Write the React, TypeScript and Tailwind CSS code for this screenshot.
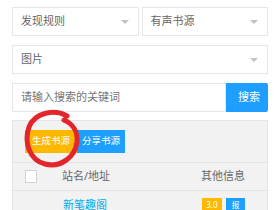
import React from "react";

const FONT = { fontFamily: '"Noto Sans", "Noto Sans CJK SC", sans-serif' };

function Select({ label, className = "" }: { label: string; className?: string }) {
  return (
    <div className={`flex h-[29px] items-center justify-between border border-[#e6e6e6] bg-white pl-[8px] pr-[9px] ${className}`}>
      <span className="text-[11px] text-[#666]">{label}</span>
      <span className="h-0 w-0 border-x-[4px] border-t-[4px] border-x-transparent border-t-[#c2c2c2]" />
    </div>
  );
}

export default function App() {
  return (
    <div className="relative h-[210px] w-[280px] overflow-hidden bg-white px-[12px] pt-[7px]" style={FONT}>
      {/* ── filters ── */}
      <div className="flex gap-[3px]">
        <Select label="发现规则" className="flex-1" />
        <Select label="有声书源" className="flex-1" />
      </div>
      <Select label="图片" className="mt-[9px]" />

      {/* ── search ── */}
      <div className="mt-[9px] flex h-[29px]">
        <div className="flex flex-1 items-center border border-[#e6e6e6] pl-[8px] text-[11px] text-[#757575]">
          请输入搜索的关键词
        </div>
        <button className="flex w-[42px] items-center justify-center rounded-r-[2px] bg-[#1e9fff] pl-[4px] text-[11px] text-white">
          搜索
        </button>
      </div>

      {/* ── table panel ── */}
      <div className="mt-[8px] border border-[#e6e6e6] bg-[#f2f2f2]">
        <div className="flex h-[42px] items-center border-b border-[#e2e2e2] pl-[12px]">
          <button className="flex h-[23px] w-[52px] items-center justify-center bg-[#ffb800] text-[9.5px] text-white">生成书源</button>
          <button className="flex h-[23px] w-[48px] items-center justify-center bg-[#1e9fff] text-[9.5px] text-white">分享书源</button>
        </div>
        <div className="flex h-[28px] items-center border-b border-[#e2e2e2] pl-[12px] pr-[22px] text-[11px] text-[#666]">
          <span className="h-[13px] w-[12px] border border-[#d2d2d2] bg-white" />
          <span className="ml-[25px]">站名/地址</span>
          <span className="ml-auto">其他信息</span>
        </div>
        <div className="flex h-[28px] items-center pl-[50px] pr-[22px] text-[11px]">
          <span className="text-[#01aaed]">新笔趣阁</span>
          <span className="ml-auto flex gap-[4px] text-[8px] text-white">
            <span className="flex h-[14px] w-[20px] items-center justify-center bg-[#ffb800]">3.0</span>
            <span className="flex h-[14px] w-[19px] items-center justify-center bg-[#1e9fff]">报</span>
          </span>
        </div>
      </div>

      {/* red annotation circle */}
      <svg className="pointer-events-none absolute left-0 top-0" width="280" height="210">
        <path
          d="M67 116 C55 109 35 112 29 127 C24 142 29 160 45 164 C61 168 75 157 77 142 C78 132 73 124 64 120"
          fill="none"
          stroke="#e3262b"
          strokeWidth="5"
          strokeLinecap="round"
        />
      </svg>
    </div>
  );
}
